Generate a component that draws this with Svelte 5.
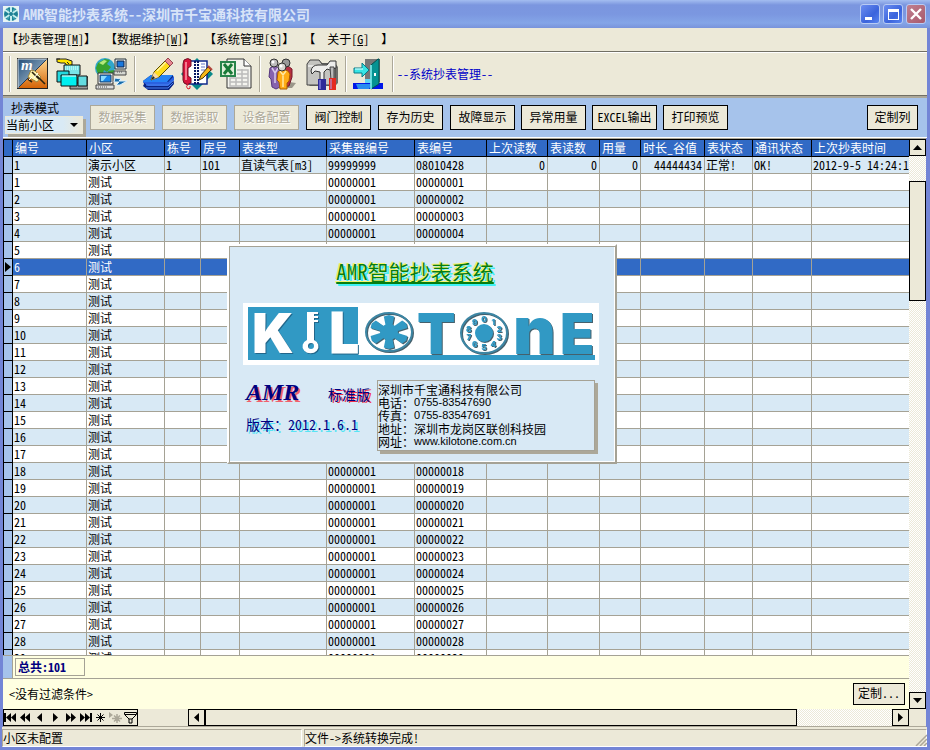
<script lang="ts">
  interface MeterRow {
    no: string;
    area: string;
    building?: string;
    room?: string;
    type?: string;
    collector: string;
    meter: string;
    last?: string;
    current?: string;
    usage?: string;
    valley?: string;
    state?: string;
    comm?: string;
    time?: string;
  }

  interface Column {
    key: keyof MeterRow;
    title: string;
    cls: string;
    right?: boolean;
  }

  const menus = [
    { pre: '【抄表管理[', hot: 'M', post: ']】' },
    { pre: '【数据维护[', hot: 'W', post: ']】' },
    { pre: '【系统管理[', hot: 'S', post: ']】' },
    { pre: '【  关于[', hot: 'G', post: ']  】' }
  ];

  const columns: Column[] = [
    { key: 'no', title: '编号', cls: 'w-no' },
    { key: 'area', title: '小区', cls: 'w-area' },
    { key: 'building', title: '栋号', cls: 'w-building' },
    { key: 'room', title: '房号', cls: 'w-room' },
    { key: 'type', title: '表类型', cls: 'w-type' },
    { key: 'collector', title: '采集器编号', cls: 'w-collector' },
    { key: 'meter', title: '表编号', cls: 'w-meter' },
    { key: 'last', title: '上次读数', cls: 'w-last', right: true },
    { key: 'current', title: '表读数', cls: 'w-current', right: true },
    { key: 'usage', title: '用量', cls: 'w-usage', right: true },
    { key: 'valley', title: '时长_谷值', cls: 'w-valley', right: true },
    { key: 'state', title: '表状态', cls: 'w-state' },
    { key: 'comm', title: '通讯状态', cls: 'w-comm' },
    { key: 'time', title: '上次抄表时间', cls: 'w-time' }
  ];

  const rows: MeterRow[] = [
    {
      no: '1', area: '演示小区', building: '1', room: '101', type: '直读气表[m3]',
      collector: '99999999', meter: '08010428', last: '0', current: '0', usage: '0',
      valley: '44444434', state: '正常!', comm: 'OK!', time: '2012-9-5 14:24:1'
    }
  ];
  for (let i = 1; i <= 29; i++) {
    rows.push({
      no: String(i),
      area: '测试',
      collector: '00000001',
      meter: String(i).padStart(8, '0')
    });
  }

  const actions = [
    { label: '数据采集', disabled: true },
    { label: '数据读取', disabled: true },
    { label: '设备配置', disabled: true },
    { label: '阀门控制', disabled: false },
    { label: '存为历史', disabled: false },
    { label: '故障显示', disabled: false }
  ];
  const moreActions = ['异常用量', 'EXCEL输出', '打印预览'];

  // record navigator glyphs, 13x13
  const navs = [
    { name: '首条', d: 'M0 2h2v9H0zM7 2v9L2 6.500zM12 2v9L7 6.500z' },
    { name: '上页', d: 'M6 2v9L1 6.500zM11 2v9L6 6.500z' },
    { name: '上条', d: 'M8 2v9L3 6.500z' },
    { name: '下条', d: 'M4 2v9L9 6.500z' },
    { name: '下页', d: 'M2 2v9L7 6.500zM7 2v9L12 6.500z' },
    { name: '末条', d: 'M1 2v9L6 6.500zM6 2v9L11 6.500zM11 2h2v9h-2z' }
  ];

  const dial = ['0', '1', '2', '3', '4', '5', '6', '7', '8', '9'].map((n, i) => {
    const a = (i * Math.PI) / 5;
    return { n, x: 241 + Math.sin(a) * 16, y: 33 - Math.cos(a) * 14 };
  });

  // arms of the water wheel, wider towards the rim
  const wheel = [0, 1, 2, 3, 4, 5].map((i) => {
    const at = (deg: number, r: number) => {
      const a = ((i * 60 + deg) * Math.PI) / 180;
      return `${(146 + Math.sin(a) * r).toFixed(1)},${(29 - Math.cos(a) * r * 0.85).toFixed(1)}`;
    };
    return [at(-24, 8), at(-16, 19), at(0, 20), at(16, 19), at(24, 8)].join(' ');
  });

  let selected = $state(6);
  let mode = $state('当前小区');
</script>

<div class="window">
  <header class="titlebar">
    <svg class="app-icon" viewBox="0 0 16 16" aria-hidden="true">
      <rect width="16" height="16" fill="#e8f4f4" />
      <circle cx="8" cy="8" r="7" fill="#1c8094" />
      <path d="M8 1v14M2 4l12 8M14 4L2 12" stroke="#c4eeee" stroke-width="2" />
      <path d="M4 2l2 3M12 2l-2 3M4 14l2-3M12 14l-2-3" stroke="#53b4c0" />
      <circle cx="8" cy="8" r="2" fill="#1c8094" />
    </svg>
    <h1>AMR智能抄表系统--深圳市千宝通科技有限公司</h1>
    <div class="win-buttons">
      <button aria-label="最小化">
        <svg viewBox="0 0 18 18"><path d="M4 12h7v3H4z" fill="#fff" /></svg>
      </button>
      <button aria-label="最大化">
        <svg viewBox="0 0 18 18"><path d="M4 4h11v11H4zM5 7v7h9V7z" fill="#fff" fill-rule="evenodd" /></svg>
      </button>
      <button class="close" aria-label="关闭">
        <svg viewBox="0 0 18 18"><path d="M4 4l10 10M14 4L4 14" stroke="#fff" stroke-width="2.400" /></svg>
      </button>
    </div>
  </header>

  <nav class="menubar">
    {#each menus as m}
      <button>{m.pre}<u>{m.hot}</u>{m.post}</button>
    {/each}
  </nav>

  <div class="toolbar">
    <i class="sep handle"></i>
    <button aria-label="抄表">
      <svg viewBox="0 0 32 32">
        <defs>
          <linearGradient id="slate" x1="0" y1="0" x2="1" y2="1"><stop stop-color="#244e78" /><stop offset="1" stop-color="#c0d4e2" /></linearGradient>
          <linearGradient id="amber" x1="0" y1="0" x2="0" y2="1"><stop stop-color="#ffd890" /><stop offset="1" stop-color="#d46408" /></linearGradient>
        </defs>
        <rect width="31" height="31" fill="#222" />
        <path d="M1 1h29L1 30z" fill="url(#slate)" />
        <path d="M30 1v29H1z" fill="url(#amber)" />
        <path d="M1 30L30 1" stroke="#243c58" />
        <path d="M1 1h29M1 1v29" stroke="#d5e0e8" />
        <text x="4" y="12" font-family="Liberation Serif" font-style="italic" font-weight="bold" font-size="15" fill="#fff">m</text>
        <path d="M14 12l4 1 6 6-4 5-9-5z" fill="#fff6b0" stroke="#9c8540" />
        <path d="M20 18l8 8M11 21l4 3M15 14l7 7" stroke="#2c2410" stroke-width="1.600" fill="none" />
        <path d="M12 22l3-3M17 20l4-5" stroke="#fff" />
      </svg>
    </button>
    <button aria-label="窗口">
      <svg viewBox="0 0 32 32">
        <path d="M1 1h9l6 2v4l-5 1-2-3H5L1 4z" fill="#ffe600" stroke="#222" />
        <path d="M0 1h4M11 4l2 2" stroke="#222" />
        <path d="M8 7h16v10H8z" fill="#78e4e8" stroke="#111" />
        <path d="M9 9h14M9 11h14" stroke="#e8ffff" stroke-dasharray="1 1" />
        <path d="M22 19h10v12H14v-6h8z" fill="#999" stroke="#222" />
        <path d="M1 13h12v11H1z" fill="#24d8de" stroke="#111" />
        <path d="M22 18h9v10h-9z" fill="#65dce0" stroke="#111" />
        <path d="M5 17h16v11H5z" fill="#00efef" stroke="#111" />
        <path d="M6 18h14" stroke="#fff" />
      </svg>
    </button>
    <button aria-label="网络">
      <svg viewBox="0 0 32 32">
        <circle cx="10" cy="10" r="10" fill="#31a6cb" />
        <path d="M3 5l7-4 5 1-3 4 4 3-4 5-3-2-2 6-4-2-2-6zM13 13l6-1-1 5-4 3z" fill="#38a22d" />
        <path d="M4 5l5-3 3 1-4 4z" fill="#b5e87c" />
        <path d="M20 1h11v10H20z" fill="#e9efef" stroke="#25313a" />
        <path d="M22 3h7v6h-7z" fill="#1978dd" stroke="#124" />
        <path d="M19 13h12v4H19z" fill="#d5d7d0" stroke="#444" />
        <path d="M3 15h15v11H3z" fill="#eee" stroke="#333" />
        <path d="M5 17h11v7H5z" fill="#1686ea" stroke="#246" />
        <path d="M6 18h6l-4 5H6z" fill="#8bdcff" />
        <path d="M1 27h18v4H1z" fill="#ddd" stroke="#444" />
        <path d="M3 29h10M22 14h5" stroke="#555" stroke-dasharray="1 1" />
        <path d="M20 20l6 1-2 2h8l-7 4h-4l3-3h-5z" fill="#176caa" stroke="#d9efff" />
      </svg>
    </button>
    <i class="sep"></i>
    <button aria-label="编辑">
      <svg viewBox="0 0 32 32">
        <path d="M1 23l8-6h22l1 9-5 6H6l-5-4 1-2z" fill="#0a2484" />
        <path d="M1 24h25l6-6v4l-6 6H6z" fill="#2a62e0" />
        <path d="M1 23l8-6h22l-6 7H1z" fill="#2582f4" />
        <path d="M4 27h22l6-5M4 30h22l5-5" stroke="#4a82f0" fill="none" />
        <path d="M9 22l3-8L24 2l5 5-12 12z" fill="#ffdc1c" stroke="#5d4c00" />
        <path d="M9 22l3-8 5 5z" fill="#f7d7a4" />
        <path d="M9 22l2-4 2 2z" fill="#222" />
        <path d="M15 13L25 3" stroke="#fff6a0" stroke-width="1.500" />
        <path d="M23 3l3-3 5 5-3 3z" fill="#e78792" stroke="#984850" />
      </svg>
    </button>
    <button aria-label="通讯录">
      <svg viewBox="0 0 32 32">
        <path d="M16 0l16 16-16 16L0 16z" fill="#098a8a" />
        <path d="M6 3h20v23H6z" fill="#fff" stroke="#102a8c" stroke-width="1.500" />
        <path d="M14 3v23M17 3v23" stroke="#071864" stroke-width="2" stroke-dasharray="2 1" />
        <path d="M20 6h4M20 9h4M20 12h4" stroke="#6579c7" />
        <path d="M3 2q4-3 7 0v6l-3 2v8l3 2v5q-4 3-7 0l-1-3V6z" fill="#d7143c" stroke="#701225" />
        <path d="M5 4v18" stroke="#ff9cab" stroke-width="1.500" />
        <path d="M7 26q-3 3 0 5q3 0 2-3" fill="none" stroke="#db172c" />
        <path d="M18 22l2-5 7-8 3 3-8 8z" fill="#f7b719" stroke="#48350c" />
        <path d="M27 8l4 4" stroke="#b2443d" stroke-width="2" />
      </svg>
    </button>
    <button aria-label="导出表格">
      <svg viewBox="0 0 32 32">
        <path d="M7 1h17l7 7v22H7z" fill="#f4f4ef" stroke="#333" />
        <path d="M24 1v7h7" fill="#fff" stroke="#333" />
        <path d="M10 20h18v8H10zM10 24h18M16 20v8M22 11v17M17 12h11v8M17 16h11" stroke="#bbb" stroke-width="1.500" fill="none" />
        <path d="M0 3h16v16H0z" fill="#29854c" />
        <path d="M2 5h12v12H2z" fill="#e0efd9" />
        <path d="M4 6l8 10M12 6L4 16" stroke="#187a37" stroke-width="3" />
      </svg>
    </button>
    <i class="sep"></i>
    <button aria-label="用户">
      <svg viewBox="0 0 32 32">
        <path d="M16 30l6-6 7 1-4 5z" fill="#9a9689" />
        <path d="M3 10l4-2 6 2v19l-4 2-4-2-1-8-2-2z" fill="#8662ae" stroke="#56377d" />
        <path d="M5 10l3 5 3-5M8 15v10" fill="none" stroke="#d9c9ea" stroke-width="1.500" />
        <path d="M16 9l5-1 4 3v8l-3 9-6 1z" fill="#b83043" stroke="#761b28" />
        <path d="M11 14l4-3 6 2 2 3-1 7-2 2v6h-7l-1-7-2-2z" fill="#ffad16" stroke="#a85c00" />
        <path d="M13 13l3 4 3-4M16 18v11" fill="none" stroke="#ffe9a2" stroke-width="1.500" />
        <circle cx="7" cy="5" r="4" fill="#bbb" stroke="#333" />
        <circle cx="19" cy="5" r="4" fill="#999" stroke="#333" />
        <circle cx="15" cy="9" r="4" fill="#d7d7d2" stroke="#333" />
        <circle cx="14" cy="8" r="1.500" fill="#fff" />
        <circle cx="6" cy="4" r="1.500" fill="#fff" />
      </svg>
    </button>
    <button aria-label="工具">
      <svg viewBox="0 0 32 32">
        <path d="M1 6l4-4h8l3 3h13l3 4v16l-3 3H4l-3-3z" fill="#6e6e6a" />
        <path d="M1 6l3-4h9l3 4h13v21H1z" fill="#c4c4c0" stroke="#444" />
        <path d="M2 7h22v2H2z" fill="#e4e4e2" />
        <path d="M5 13q1-6 7-6h9l3-4h6v7l-6 2-3-1-3 3v9h-4v-9l-5-1-3 3z" fill="#ededeb" stroke="#333" />
        <path d="M24 9h4v13h-3z" fill="#bbb" stroke="#444" />
        <path d="M12 21h8v11h-8z" fill="#2c2a99" />
        <path d="M23 20h7v12h-7z" fill="#e52a20" />
        <path d="M14 22v9M25 21v10" stroke="#a9a5fa" />
      </svg>
    </button>
    <i class="sep"></i>
    <button aria-label="退出">
      <svg viewBox="0 0 32 32">
        <path d="M12 1h15v23H12z" fill="#777" />
        <path d="M0 25h30v6H0z" fill="#0016e8" />
        <path d="M3 26h16l-3 5H5z" fill="#2a8cf0" />
        <path d="M12 21h8v4h-8z" fill="#5ed4f6" />
        <path d="M18 7l7-6h1v25l-8 5z" fill="#059292" stroke="#034f50" />
        <path d="M18 7v24" stroke="#8ff" stroke-width="1.500" />
        <path d="M21 15h2v3h-2z" fill="#fff" />
        <path d="M1 10h8V5l7 7-7 7v-4H1z" fill="#37e5e6" stroke="#087b87" />
        <path d="M2 11h8" stroke="#efffff" />
      </svg>
    </button>
    <i class="sep"></i>
    <span class="module">--系统抄表管理--</span>
  </div>

  <div class="panel">
    <div class="mode">
      <label for="mode">抄表模式</label>
      <div class="combo">
        <select id="mode" bind:value={mode}>
          <option>当前小区</option>
          <option>全部小区</option>
        </select>
        <svg viewBox="0 0 8 4" aria-hidden="true"><path d="M0 0h8L4 4z" /></svg>
      </div>
    </div>
    <div class="actions wide">
      {#each actions as a}
        <button class="btn" disabled={a.disabled}>{a.label}</button>
      {/each}
    </div>
    <div class="actions">
      {#each moreActions as label}
        <button class="btn">{label}</button>
      {/each}
    </div>
    <button class="btn custom-columns">定制列</button>
  </div>

  <main class="frame">
    <div class="grid-area">
      <div class="grid-main">
        <div class="table-clip">
          <table>
            <thead>
              <tr>
                <th class="mark" aria-label="当前行"></th>
                {#each columns as c}
                  <th class={c.cls}>{c.title}</th>
                {/each}
              </tr>
            </thead>
            <tbody>
              {#each rows as row, i}
                <tr class:selected={i === selected} onclick={() => (selected = i)}>
                  <td class="mark">
                    {#if i === selected}
                      <svg viewBox="0 0 6 10" aria-hidden="true"><path d="M0 0l6 5-6 5z" /></svg>
                    {/if}
                  </td>
                  {#each columns as c}
                    <td class:right={c.right}>{row[c.key] ?? ''}</td>
                  {/each}
                </tr>
              {/each}
            </tbody>
          </table>
        </div>
        <div class="total">
          <i></i>
          <output>总共:101</output>
        </div>
        <div class="filter">
          <span>&lt;没有过滤条件&gt;</span>
          <button class="btn small">定制...</button>
        </div>
      </div>
      <div class="vscroll">
        <button class="arrow" aria-label="向上"><svg viewBox="0 0 9 9"><path d="M0 7h9L4.500 2z" /></svg></button>
        <div class="vthumb"></div>
        <button class="arrow" aria-label="向下"><svg viewBox="0 0 9 9"><path d="M0 2h9L4.500 7z" /></svg></button>
      </div>
    </div>

    <div class="bottom">
      <div class="navigator">
        {#each navs as n}
          <button aria-label={n.name}><svg viewBox="0 0 13 13"><path d={n.d} /></svg></button>
        {/each}
        <button aria-label="添加书签">
          <svg viewBox="0 0 13 13"><path d="M6.500 2v9M2 6.500h9M3.500 3.500l6 6M9.500 3.500l-6 6" stroke="#000" /></svg>
        </button>
        <button aria-label="转到书签" disabled>
          <svg viewBox="0 0 13 13"><path d="M0 1l4 3-4 3z" fill="#aca899" /><path d="M8 3v9M3 7.500h10M5 4.500l6 6M11 4.500l-6 6" stroke="#aca899" stroke-width="1.500" /></svg>
        </button>
        <button aria-label="过滤">
          <svg viewBox="0 0 13 13"><path d="M.5 1.500h12v2L8 8v4H5V8L.5 3.500zM1 3.500h11M5 8h3" fill="none" stroke="#000" /></svg>
        </button>
      </div>
      <div class="hscroll">
        <button class="arrow" aria-label="向左"><svg viewBox="0 0 9 9"><path d="M7 0v9L2 4.500z" /></svg></button>
        <div class="hthumb"></div>
        <div class="hrest"></div>
        <button class="arrow" aria-label="向右"><svg viewBox="0 0 9 9"><path d="M2 0v9L7 4.500z" /></svg></button>
      </div>
    </div>
  </main>

  <footer class="statusbar">
    <span>小区未配置</span>
    <span>文件-&gt;系统转换完成!</span>
    <svg class="grip" viewBox="0 0 12 12" aria-hidden="true">
      <path d="M1 12L12 1M5 12l7-7M9 12l3-3" stroke="#aca899" stroke-width="1.500" />
    </svg>
  </footer>

  <section class="splash" aria-label="关于">
    <h2>AMR智能抄表系统</h2>
    <svg class="logo" viewBox="0 0 356 62" role="img" aria-label="KILOTONE">
      <rect width="356" height="62" fill="#fff" />
      <rect x="5" y="4" width="110" height="53" fill="#3199c4" />
      <rect x="5" y="52" width="347" height="5" fill="#3199c4" />
      <g class="white-part">
        <text x="9" y="50" font-size="55">K</text>
        <path d="M64 9h11v2h-4v2h4v2h-4v2h4v2h-4v18a8 7 0 1 1-7 0zM68 40a3 3 0 1 0 0 6 3 3 0 0 0 0-6z" fill-rule="evenodd" />
        <text class="lato" x="86" y="49" font-size="54">L</text>
      </g>
      <g class="blue-part">
        <ellipse cx="146" cy="29" rx="23" ry="19" fill="none" stroke="#3d86a4" stroke-width="2" />
        {#each wheel as points}
          <polygon {points} />
        {/each}
        <ellipse cx="146" cy="29" rx="9" ry="8" />
        <text x="174" y="51" font-size="56">T</text>
        <ellipse cx="241" cy="30" rx="23" ry="20" fill="none" stroke="#3d86a4" stroke-width="2" />
        <circle cx="241" cy="30" r="9" />
        {#each dial as d}
          <text class="digit" x={d.x} y={d.y} font-size="8">{d.n}</text>
        {/each}
        <text x="270" y="51" font-size="66">n</text>
        <text x="317" y="51" font-size="56">E</text>
      </g>
    </svg>
    <div class="about">
      <div class="edition">
        <strong>AMR</strong>
        <em>标准版</em>
        <p>版本：2012.1.6.1</p>
      </div>
      <address>
        深圳市千宝通科技有限公司<br />
        电话：<span>0755-83547690</span><br />
        传真：<span>0755-83547691</span><br />
        地址：深圳市龙岗区联创科技园<br />
        网址：<span>www.kilotone.com.cn</span>
      </address>
    </div>
  </section>
</div>

<style>
  :global(body) {
    margin: 0;
  }

  .window {
    position: relative;
    box-sizing: border-box;
    height: 100vh;
    min-height: 500px;
    display: flex;
    flex-direction: column;
    padding: 0 3px 3px;
    background: #7385d6;
    color: #000;
    font-family: 'Noto Sans CJK SC', sans-serif;
    font-size: 12px;
    line-height: 16px;
    font-feature-settings: 'hwid';
    overflow: hidden;
  }

  button,
  select {
    font: inherit;
    font-feature-settings: inherit;
    color: inherit;
    margin: 0;
    padding: 0;
    border: 0;
    border-radius: 0;
    background: none;
    box-sizing: border-box;
  }

  svg {
    display: block;
  }

  /* title bar */
  .titlebar {
    display: flex;
    align-items: center;
    flex: none;
    height: 28px;
    margin: 0 -3px;
    padding: 0 4px 0 3px;
    gap: 4px;
    background: linear-gradient(#a3bdf0, #7b96df 5px, #7b97e0 14px, #84a5e7 23px, #7993db);
  }

  .app-icon {
    width: 16px;
    height: 16px;
  }

  h1 {
    flex: 1;
    margin: 0;
    font-size: 14px;
    line-height: 20px;
    font-weight: bold;
    color: #d8e4f8;
    white-space: nowrap;
    overflow: hidden;
  }

  .win-buttons {
    display: flex;
    gap: 3px;
  }

  .win-buttons button {
    width: 20px;
    height: 20px;
    border: 1px solid #b8cbf4;
    border-radius: 3px;
    background: linear-gradient(135deg, #6b8df0, #3b64dc 60%, #5884f0);
  }

  .win-buttons .close {
    background: linear-gradient(135deg, #c08090, #a8596c);
  }

  /* menus and tools */
  .menubar {
    display: flex;
    flex: none;
    gap: 9px;
    box-sizing: border-box;
    height: 24px;
    padding: 0 0 2px 3px;
    background: #ece9d8;
    border-bottom: 1px solid #716f64;
  }

  .menubar button {
    white-space: pre;
  }

  .toolbar {
    display: flex;
    flex: none;
    align-items: center;
    gap: 7px;
    box-sizing: border-box;
    height: 44px;
    padding-left: 6px;
    background: #ece9d8;
    border-bottom: 1px solid #716f64;
    box-shadow: inset 0 1px #fff;
  }

  .toolbar button,
  .toolbar button svg {
    width: 32px;
    height: 32px;
  }

  .sep {
    width: 1px;
    height: 36px;
    background: #aca899;
    box-shadow: 1px 0 #fff;
  }

  .module {
    margin-left: -3px;
    color: #0000c8;
    white-space: nowrap;
  }

  /* action panel */
  .panel {
    display: flex;
    flex: none;
    align-items: center;
    gap: 6px;
    box-sizing: border-box;
    height: 42px;
    padding: 0 9px 0 2px;
    background: #a6c3eb;
    border-top: 2px solid #aca899;
    border-bottom: 1px solid #fff;
  }

  .mode label {
    display: block;
    padding-left: 6px;
  }

  .combo {
    position: relative;
    width: 78px;
    margin-bottom: 2px;
    box-shadow: 3px 3px #aca899;
  }

  .combo select {
    display: block;
    appearance: none;
    width: 100%;
    height: 18px;
    line-height: 16px;
    background: linear-gradient(90deg, #d9eaf5 75%, #ece9d8);
    border: 1px solid #ece9d8;
  }

  .combo svg {
    position: absolute;
    right: 5px;
    top: 7px;
    width: 8px;
    height: 4px;
    pointer-events: none;
  }

  .actions {
    display: flex;
    gap: 6px;
  }

  .actions.wide {
    gap: 7px;
    margin-left: 1px;
  }

  .btn {
    width: 65px;
    height: 25px;
    padding-bottom: 2px;
    line-height: 16px;
    background: #ece9d8;
    border: 1px solid #000;
    white-space: nowrap;
  }

  .btn:disabled {
    color: #aca899;
    border-color: #aca899;
    text-shadow: 1px 1px #fff;
  }

  .custom-columns {
    width: 51px;
    margin-left: auto;
  }

  /* grid */
  .frame {
    display: flex;
    flex: 1;
    flex-direction: column;
    min-height: 0;
    margin-right: 1px;
    border-top: 1px solid #aca899;
    border-bottom: 1px solid #aca899;
    background: #ece9d8;
  }

  .grid-area {
    display: flex;
    flex: 1;
    min-height: 0;
  }

  .grid-main {
    display: flex;
    flex: 1;
    flex-direction: column;
    min-width: 0;
  }

  .table-clip {
    flex: 1;
    min-height: 0;
    overflow: hidden;
    background: #fff;
  }

  table {
    width: 100%;
    table-layout: fixed;
    border-collapse: separate;
    border-spacing: 0;
  }

  th,
  td {
    box-sizing: border-box;
    height: 17px;
    padding: 0 0 0 1px;
    line-height: 16px;
    text-align: left;
    font-weight: normal;
    white-space: nowrap;
    overflow: hidden;
    border-right: 1px solid #a5a295;
    border-bottom: 1px solid #a5a295;
  }

  th {
    height: 18px;
    padding-left: 2px;
    color: #fff;
    background: #316ac5;
    border-top: 1px solid #000;
    border-right-color: #000;
    border-bottom-color: #000;
  }

  td.right {
    padding-right: 2px;
    text-align: right;
  }

  th:last-child,
  td:last-child {
    border-right: 0;
  }

  tbody tr:nth-child(odd) {
    background: #d8e9f5;
  }

  tbody tr.selected {
    color: #fff;
    background: #316ac5;
  }

  .mark {
    width: 10px;
    padding: 0 1px;
    border-left: 1px solid #000;
    border-right-color: #000;
    border-bottom-color: #000;
  }

  td.mark {
    background: #a6c3eb;
  }

  .mark svg {
    width: 6px;
    height: 10px;
  }

  .mark path {
    fill: #000;
  }

  .w-no { width: 74px; }
  .w-area { width: 78px; }
  .w-building { width: 36px; }
  .w-room { width: 39px; }
  .w-type { width: 87px; }
  .w-collector { width: 88px; }
  .w-meter { width: 72px; }
  .w-last { width: 61px; }
  .w-current { width: 52px; }
  .w-usage { width: 41px; }
  .w-valley { width: 64px; }
  .w-state { width: 48px; }
  .w-comm { width: 59px; }

  .total {
    display: flex;
    flex: none;
    box-sizing: border-box;
    height: 24px;
    background: #ffffe1;
    border-top: 1px solid #a5a295;
    border-bottom: 1px solid #a5a295;
  }

  .total i {
    width: 9px;
    background: #a6c3eb;
    border-right: 1px solid #a5a295;
  }

  .total output {
    box-sizing: border-box;
    width: 70px;
    height: 18px;
    margin: 2px;
    padding-left: 2px;
    color: #000080;
    font-weight: bold;
    border: 1px solid #a5a295;
  }

  .filter {
    display: flex;
    flex: none;
    align-items: center;
    justify-content: space-between;
    height: 30px;
    padding: 0 4px 0 6px;
    background: #ffffe1;
  }

  .btn.small {
    width: 52px;
    height: 22px;
  }

  /* scroll bars */
  .vscroll,
  .hscroll {
    display: flex;
    background: repeating-conic-gradient(#ece9d8 0 25%, #fff 0 50%) 0 0 / 2px 2px;
  }

  .vscroll {
    flex-direction: column;
    justify-content: space-between;
    width: 17px;
  }

  .arrow {
    display: flex;
    flex: none;
    align-items: center;
    justify-content: center;
    width: 17px;
    height: 17px;
    background: #ece9d8;
    border: 1px solid #000;
  }

  .arrow svg {
    width: 9px;
    height: 9px;
  }

  .vthumb {
    box-sizing: border-box;
    height: 120px;
    margin: 25px 0 auto;
    background: #ece9d8;
    border: 1px solid #000;
  }

  .bottom {
    display: flex;
    flex: none;
    height: 17px;
    padding-right: 17px;
  }

  .navigator {
    display: flex;
    align-items: center;
    box-sizing: border-box;
    width: 135px;
    margin-right: 50px;
    gap: 2px;
    border: 1px solid #000;
  }

  .navigator svg {
    width: 13px;
    height: 13px;
  }

  .hscroll {
    flex: 1;
  }

  .hthumb {
    flex: 592;
    box-sizing: border-box;
    background: #ece9d8;
    border: 1px solid #000;
  }

  .hrest {
    flex: 95;
  }

  /* status bar */
  .statusbar {
    display: flex;
    flex: none;
    align-items: flex-end;
    gap: 2px;
    height: 20px;
    margin-left: -1px;
    background: #ece9d8;
    position: relative;
  }

  .statusbar span {
    box-sizing: border-box;
    width: 300px;
    height: 18px;
    border: 1px solid #fff;
    border-top-color: #aca899;
    border-left-color: #aca899;
  }

  .statusbar span + span {
    flex: 1;
  }

  .grip {
    position: absolute;
    right: 0;
    bottom: 1px;
    width: 12px;
    height: 12px;
  }

  /* splash window over the grid */
  .splash {
    position: absolute;
    left: 227px;
    top: 244px;
    box-sizing: border-box;
    width: 390px;
    padding: 12px 14px 9px;
    background: #d8e9f5;
    border: 2px solid #fff;
    border-right-color: #a5a295;
    border-bottom-color: #a5a295;
    box-shadow: inset 1px 1px #a5a295, inset -1px -1px #fff;
  }

  h2 {
    margin: 0 0 19px;
    padding-right: 14px;
    font-size: 21px;
    line-height: 26px;
    font-weight: normal;
    text-align: center;
    text-decoration: underline;
    color: #087d10;
    text-shadow: -1px -1px #f5f56c, 2px 2px #3ff0f4;
  }

  .logo {
    width: 356px;
    height: 62px;
    font-family: Inter, sans-serif;
    font-weight: 900;
  }

  .logo .lato {
    font-family: Lato, sans-serif;
    stroke: #fff;
    stroke-width: 3px;
  }

  .white-part {
    fill: #fff;
    filter: drop-shadow(1px 1px 0 #22668a);
  }

  .blue-part {
    fill: #3199c4;
    filter: drop-shadow(1px 1px 0 #45606c);
  }

  .logo .digit {
    text-anchor: middle;
  }

  .about {
    display: flex;
    justify-content: space-between;
    padding: 15px 6px 2px 3px;
  }

  .edition {
    display: grid;
    grid-template-columns: 82px auto;
    align-content: start;
    align-items: end;
    color: #000080;
    font-size: 14px;
    line-height: 20px;
    white-space: nowrap;
  }

  .edition strong {
    font-family: 'Liberation Serif', serif;
    font-size: 24px;
    font-style: italic;
    line-height: 24px;
    text-shadow: 2px 2px #f0606c;
  }

  .edition em {
    font-style: normal;
    text-shadow: 2px 1px #f03048;
  }

  .edition p {
    grid-column: 1 / 3;
    margin: 10px 0 0;
    text-shadow: 2px 2px #58e4f4;
  }

  address {
    box-sizing: border-box;
    width: 218px;
    height: 71px;
    padding: 2px 0;
    font-style: normal;
    line-height: 13px;
    white-space: nowrap;
    border: 1px solid #a5a295;
    box-shadow: 3px 3px #aca899;
  }

  address span {
    font-family: 'Liberation Sans', sans-serif;
    font-size: 11px;
    vertical-align: top;
  }
</style>
